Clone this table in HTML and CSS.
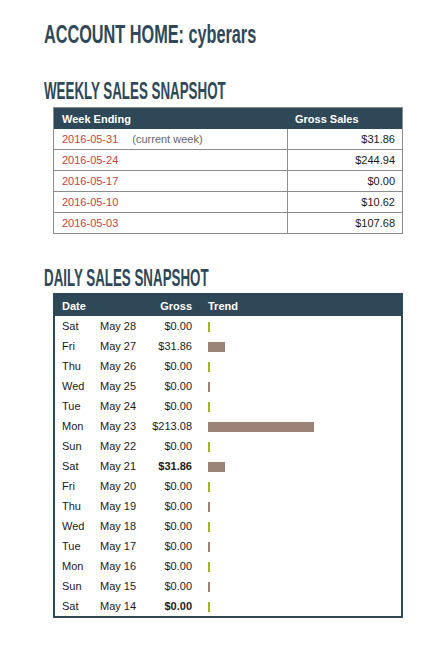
FILE: index.html
```html
<!DOCTYPE html>
<html lang="en">
<head>
    <meta charset="UTF-8">
    <meta name="viewport" content="width=device-width, initial-scale=1.0">
    <title>Account Home</title>
    <link rel="stylesheet" href="styles.css">
</head>
<body>
    <div class="page">
        <h1 class="title"><span class="squeeze">ACCOUNT HOME: cyberars</span></h1>

        <h2 class="section"><span class="squeeze">WEEKLY SALES SNAPSHOT</span></h2>
        <table class="weekly">
            <thead>
                <tr><th class="week">Week Ending</th><th class="gross">Gross Sales</th></tr>
            </thead>
            <tbody>
                <tr><td class="week"><span class="date">2016-05-31</span><span class="note">(current week)</span></td><td class="amount">$31.86</td></tr>
                <tr><td class="week"><span class="date">2016-05-24</span></td><td class="amount">$244.94</td></tr>
                <tr><td class="week"><span class="date">2016-05-17</span></td><td class="amount">$0.00</td></tr>
                <tr><td class="week"><span class="date">2016-05-10</span></td><td class="amount">$10.62</td></tr>
                <tr><td class="week"><span class="date">2016-05-03</span></td><td class="amount">$107.68</td></tr>
            </tbody>
        </table>

        <h2 class="section daily-title"><span class="squeeze">DAILY SALES SNAPSHOT</span></h2>
        <table class="daily">
            <thead>
                <tr><th class="day">Date</th><th class="md"></th><th class="gross">Gross</th><th class="trend">Trend</th></tr>
            </thead>
            <tbody>
                <tr><td class="day">Sat</td><td class="md">May 28</td><td class="gross">$0.00</td><td class="trend"><span class="bar zero"></span></td></tr>
                <tr><td class="day">Fri</td><td class="md">May 27</td><td class="gross">$31.86</td><td class="trend"><span class="bar" style="width: 17px"></span></td></tr>
                <tr><td class="day">Thu</td><td class="md">May 26</td><td class="gross">$0.00</td><td class="trend"><span class="bar zero"></span></td></tr>
                <tr><td class="day">Wed</td><td class="md">May 25</td><td class="gross">$0.00</td><td class="trend"><span class="bar" style="width: 2px"></span></td></tr>
                <tr><td class="day">Tue</td><td class="md">May 24</td><td class="gross">$0.00</td><td class="trend"><span class="bar zero"></span></td></tr>
                <tr><td class="day">Mon</td><td class="md">May 23</td><td class="gross">$213.08</td><td class="trend"><span class="bar" style="width: 106px"></span></td></tr>
                <tr><td class="day">Sun</td><td class="md">May 22</td><td class="gross">$0.00</td><td class="trend"><span class="bar zero"></span></td></tr>
                <tr><td class="day">Sat</td><td class="md">May 21</td><td class="gross total">$31.86</td><td class="trend"><span class="bar" style="width: 17px"></span></td></tr>
                <tr><td class="day">Fri</td><td class="md">May 20</td><td class="gross">$0.00</td><td class="trend"><span class="bar zero"></span></td></tr>
                <tr><td class="day">Thu</td><td class="md">May 19</td><td class="gross">$0.00</td><td class="trend"><span class="bar" style="width: 2px"></span></td></tr>
                <tr><td class="day">Wed</td><td class="md">May 18</td><td class="gross">$0.00</td><td class="trend"><span class="bar zero"></span></td></tr>
                <tr><td class="day">Tue</td><td class="md">May 17</td><td class="gross">$0.00</td><td class="trend"><span class="bar" style="width: 2px"></span></td></tr>
                <tr><td class="day">Mon</td><td class="md">May 16</td><td class="gross">$0.00</td><td class="trend"><span class="bar zero"></span></td></tr>
                <tr><td class="day">Sun</td><td class="md">May 15</td><td class="gross">$0.00</td><td class="trend"><span class="bar" style="width: 2px"></span></td></tr>
                <tr><td class="day">Sat</td><td class="md">May 14</td><td class="gross total">$0.00</td><td class="trend"><span class="bar zero"></span></td></tr>
            </tbody>
        </table>
    </div>
</body>
</html>
```

FILE: styles.css
```css
body {
    margin: 0;
    background: #ffffff;
    font-family: "Liberation Sans", Arial, sans-serif;
    font-size: 11px;
    color: #1a1a1a;
}
.page {
    padding: 22px 0 0 44px;
}
.title,
.section {
    font-family: "Liberation Sans", Arial, sans-serif;
    font-weight: bold;
    color: #2f4858;
    margin: 0;
    line-height: 1;
    white-space: nowrap;
}
/* no condensed face installed, so squeeze the bold one */
.squeeze {
    display: inline-block;
    transform-origin: left center;
}
.title {
    font-size: 25px;
    height: 57px;
}
.title .squeeze {
    transform: scaleX(0.65);
}
.section {
    font-size: 24px;
    height: 28px;
}
.section .squeeze {
    transform: scaleX(0.556);
}
.daily-title {
    margin-top: 32px;
    height: 27px;
}
table {
    border-collapse: collapse;
    margin-left: 9px;
    width: 350px;
    table-layout: fixed;
}
th {
    background: #2f4858;
    color: #ffffff;
    font-weight: bold;
    text-align: left;
    height: 21px;
    padding: 0;
}

/* weekly */
.weekly {
    border: 1px solid #8c8c8c;
}
.weekly th.week {
    width: 225px;
    padding-left: 8px;
}
.weekly th.gross {
    padding-left: 8px;
}
.weekly td {
    height: 20px;
    padding: 0;
    border-bottom: 1px solid #8c8c8c;
}
.weekly td.week {
    padding-left: 8px;
    border-right: 1px solid #8c8c8c;
}
.weekly .date {
    color: #c0453a;
}
.weekly .note {
    color: #666666;
    margin-left: 14px;
}
.weekly td.amount {
    text-align: right;
    padding-right: 7px;
}

/* daily */
.daily {
    border: 2px solid #2f4858;
}
.daily th,
.daily td {
    padding: 0;
}
.daily td {
    height: 20px;
}
.daily .day {
    width: 38px;
    padding-left: 7px;
}
.daily .md {
    width: 52px;
}
.daily .gross {
    width: 40px;
    text-align: right;
}
.daily .trend {
    padding-left: 16px;
}
.daily .total {
    font-weight: bold;
}
.bar {
    display: inline-block;
    vertical-align: middle;
    width: 2px;
    height: 10px;
    background: #9b8477;
}
.bar.zero {
    background: #9bbb14;
}
```
